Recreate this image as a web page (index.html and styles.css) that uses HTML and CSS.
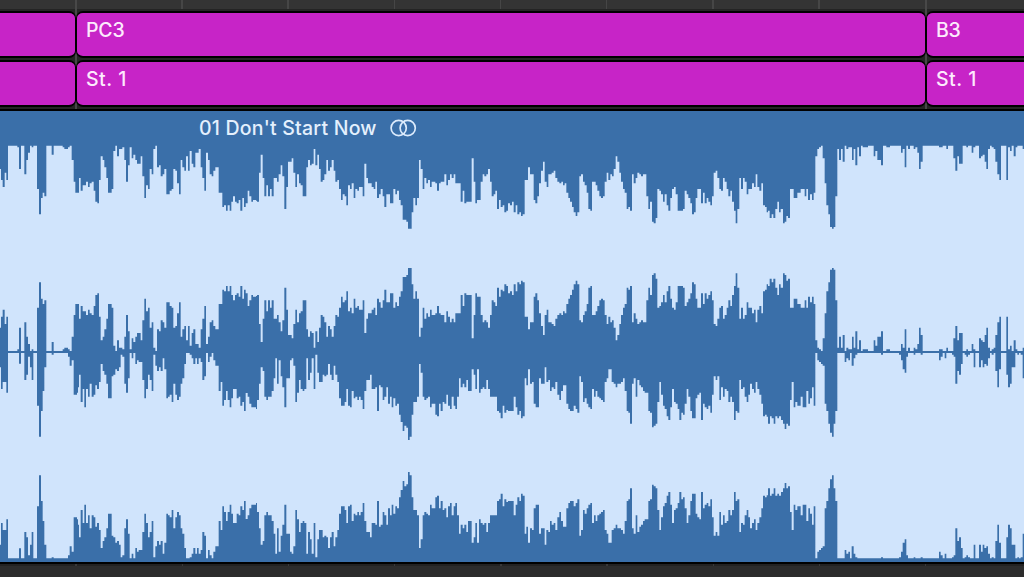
FILE: index.html
```html
<!DOCTYPE html>
<html lang="en">
<head>
<meta charset="utf-8">
<title>Arrangement</title>
<link rel="stylesheet" href="styles.css">
</head>
<body>
<main class="arrange">
  <div class="ruler-gap"></div>
  <div class="lane">
    <div class="region region-start"></div>
    <div class="region region-mid">PC3</div>
    <div class="region region-end">B3</div>
  </div>
  <div class="lane">
    <div class="region region-start"></div>
    <div class="region region-mid section">St. 1</div>
    <div class="region region-end section">St. 1</div>
  </div>
  <section class="audio">
    <header class="audio-head">
      <span class="audio-name">01 Don't Start Now</span>
      <svg class="stereo" viewBox="0 0 28 20"><circle cx="9.7" cy="10" r="7.6"/><circle cx="18.7" cy="10" r="7.6"/></svg>
    </header>
    <svg class="wave" viewBox="0 435 3072 1251" preserveAspectRatio="none"><path id="left"/><path id="right"/></svg>
  </section>
  <div class="lane-gap"></div>
</main>
<script src="wave.js"></script>
</body>
</html>
```
FILE: styles.css
```css
* { box-sizing: border-box; }
body {
  margin: 0;
  width: 1024px;
  height: 577px;
  overflow: hidden;
  background: #2c2c2c;
  font-family: Inter, "Liberation Sans", sans-serif;
}
.arrange {
  height: 577px;
  display: flex;
  flex-direction: column;
  background:
    linear-gradient(#484848, #484848) 75px 0 / 2px 109px no-repeat,
    linear-gradient(#484848, #484848) 925px 0 / 2px 109px no-repeat,
    repeating-linear-gradient(90deg, #464646 0 1.5px, transparent 1.5px 106.2px) 75.3px 0 / 1100px 9px no-repeat,
    linear-gradient(#343434 0 9px, #242424 9px 111px, #2c2c2c 111px);
}
.ruler-gap { height: 11px; flex: none; }
.lane {
  height: 47px;
  margin-bottom: 2px;
  flex: none;
  display: grid;
  grid-template-columns: 76px 850px 1fr;
}
.region {
  background: #c724c7;
  border: solid #000;
  border-width: 2px 1px;
  border-radius: 7px;
  padding: 4.5px 0 0 9px;
  color: #fdeafd;
  font-size: 19.5px;
  font-weight: 500;
  letter-spacing: -0.2px;
  line-height: 24px;
}
.section { letter-spacing: 0.5px; }
.region-start { border-left: 0; border-top-left-radius: 0; border-bottom-left-radius: 0; }
.region-end { border-right: 0; border-top-right-radius: 0; border-bottom-right-radius: 0; }
.audio {
  flex: none;
  height: 455px;
  border-top: 2px solid #000;
  border-bottom: 2px solid #000;
  background: #3a6fa9;
}
.audio-head {
  height: 34px;
  padding-left: 199px;
  display: flex;
  align-items: center;
  color: #e4f0fd;
}
.audio-name { width: 180px; white-space: nowrap; font-size: 19.5px; font-weight: 500; line-height: 24px; letter-spacing: 0.22px; }
.stereo { width: 28px; height: 20px; margin-left: 10px; fill: none; stroke: #dcebfc; stroke-width: 1.7; }
.wave { display: block; width: 1024px; height: 417px; fill: #d0e4fc; }
.lane-gap {
  height: 2px;
  background: repeating-linear-gradient(90deg, #383838 0 1.5px, #222 1.5px 106.2px) -30.9px 0 / 1100px 2px no-repeat;
}
```
FILE: wave.js
```js
// Envelope runs per quarter of the clip: "start:edge"; each run holds until the next start.
const left = [
  "0:203 3:170 8:149 14:192 19:170 24:273 52:268 57:203 63:273 73:187 79:230 84:252 90:273 95:268 100:273 111:143 117:67 123:116 128:132 133:121 139:273 155:246 161:273 188:268 193:263 204:268 209:273 215:230 221:165 226:132 237:176 242:138 248:154 258:165 264:149 269:160 275:165 281:138 286:105 292:100 297:170 302:241 308:230 313:208 319:176 324:132 335:143 340:257 346:273 351:241 357:263 367:268 373:230 378:165 384:214 389:268 395:235 400:246 406:230 411:219 422:241 427:181 433:116 438:154 444:143 449:203 455:187 460:263 466:273 471:208 477:214 482:181 488:187 493:203 499:127 509:138 515:143 520:203 526:198 531:160 537:127 542:230 547:208 553:198 558:241 564:198 569:257 575:219 580:208 586:252 596:263 602:208 607:176 613:138 618:252 624:230 629:187 635:181 640:198 646:208 656:132 667:89 672:94 678:78 683:94 689:78 694:105 699:121 705:105 710:100 716:110 721:78 727:116 732:89 737:100 743:138 748:121 754:105 759:110",
  "0:108 3:105 9:192 14:246 20:176 25:121 31:154 36:121 42:143 47:121 53:176 63:165 68:187 74:214 79:181 85:83 91:149 96:225 107:235 112:192 118:149 123:187 129:160 134:154 140:121 151:208 156:230 162:214 167:219 173:263 178:214 184:246 189:203 194:165 200:170 205:187 211:230 216:198 222:208 227:230 233:198 238:165 244:170 249:143 255:110 260:127 266:121 271:94 276:154 282:143 287:160 293:116 298:143 304:138 309:149 320:121 325:219 331:176 336:160 347:149 353:143 358:165 363:116 369:127 374:143 380:121 385:89 391:127 402:100 412:143 418:127 423:138 429:110 434:94 440:51 451:45 456:24 467:73 472:116 478:94 483:116 489:230 494:203 500:143 505:176 511:160 516:170 522:149 527:165 538:160 543:138 549:160 554:165 565:187 571:154 576:170 582:187 587:176 593:187 598:160 614:105 620:138 625:100 631:105 647:235 653:165 658:100 663:110 674:165 680:187 685:181 691:187 696:203 702:165 707:121 713:127 718:138 723:83 729:110 734:89 740:94 745:73 751:78 756:100 762:94",
  "0:105 5:73 11:94 16:67 22:73 27:62 32:67 38:170 48:208 54:187 65:110 70:100 76:121 81:160 87:198 93:225 98:165 104:149 109:187 119:192 125:198 130:176 136:165 142:160 148:165 153:154 158:160 163:132 169:116 174:105 180:89 185:73 191:62 196:73 202:181 207:187 213:165 218:154 224:132 229:83 235:78 240:165 251:154 256:138 262:121 267:116 273:121 278:165 284:192 289:170 295:187 300:181 305:203 311:241 316:225 322:192 327:165 333:143 338:132 344:83 349:89 354:78 360:187 365:160 371:176 376:192 382:187 387:181 393:187 403:121 409:83 414:105 420:45 425:40 431:56 436:143 442:138 447:127 453:105 458:127 464:94 469:78 475:116 480:143 486:149 491:127 497:78 513:83 518:138 524:127 529:116 535:100 540:67 546:73 551:116 556:143 567:100 573:132 578:100 584:116 589:105 595:94 600:121 605:192 611:198 616:176 622:143 627:138 633:176 638:165 644:143 649:121 655:138 660:105 666:78 671:40 676:83 682:176 687:143 693:176 698:165 704:127 709:143 720:160 726:149 731:187 736:149 742:138 748:160 753:94 759:89 764:73",
  "0:78 5:56 11:67 16:56 22:83 28:105 33:73 38:83 45:40 50:45 55:62 60:56 66:143 77:116 88:132 98:143 110:121 115:143 120:110 126:127 132:110 137:132 142:241 148:263 153:268 159:273 164:235 170:160 175:94 181:67 186:29 192:24 197:29 202:121 208:263 213:230 219:263 224:225 230:273 235:263 241:268 252:230 257:263 262:214 268:268 273:241 279:273 284:268 300:273 317:241 322:257 328:230 339:214 345:273 355:268 366:273 399:252 404:263 410:208 415:273 420:263 426:273 437:263 442:268 448:252 453:203 458:225 464:273 513:268 524:273 535:263 540:273 556:235 562:198 568:241 573:219 584:273 595:268 600:273 611:252 616:268 622:273 633:235 639:241 644:246 650:225 655:203 660:263 666:273 671:268 677:263 682:225 688:187 694:170 699:273 715:170 720:268 726:257 731:273 737:241 743:268 748:273 764:263"
];
const right = [
  "0:322 3:387 8:366 19:398 24:279 57:311 63:279 73:360 79:344 84:290 90:322 95:360 100:279 111:437 117:530 123:453 128:393 133:322 139:279 155:284 161:279 204:290 209:317 215:301 221:404 231:398 234:382 237:344 242:426 248:387 253:442 258:387 264:410 269:371 275:410 281:404 286:376 291:387 297:366 302:312 308:333 313:344 319:371 324:415 335:349 340:344 346:328 351:333 357:322 362:284 367:290 373:371 378:398 384:355 389:279 395:295 400:279 406:312 411:301 416:306 427:360 433:415 438:387 444:344 449:360 455:393 460:284 466:317 471:333 477:322 482:333 488:295 493:328 499:415 504:410 509:404 515:426 520:371 526:404 531:420 537:410 542:371 547:355 553:312 558:279 569:284 575:295 580:312 586:295 591:312 596:295 602:306 607:360 613:349 618:279 624:306 629:290 635:279 640:301 646:317 656:393 662:366 667:437 672:420 678:393 683:420 689:442 694:415 699:387 710:415 716:410 721:437 727:426 732:453 737:399 743:410 748:431 754:442",
  "0:447 3:420 9:371 14:322 20:333 25:410 31:420 36:410 47:393 53:355 58:295 63:371 68:301 74:349 79:382 85:442 91:355 102:301 107:295 112:317 118:426 123:398 129:360 134:387 140:393 145:387 151:295 156:360 162:338 167:295 173:387 178:284 184:338 189:366 200:344 205:349 211:344 216:312 222:344 227:360 233:317 238:344 244:366 249:415 255:437 266:426 271:387 276:437 282:442 287:393 293:415 298:410 304:420 309:410 314:420 320:447 325:393 331:360 342:344 347:387 358:382 363:453 369:376 374:382 380:420 385:410 391:382 396:431 402:410 407:442 412:415 418:437 423:431 429:464 434:486 440:513 445:497 451:503 456:540 461:530 467:464 472:426 483:410 489:312 494:338 500:410 505:420 511:415 516:410 522:442 527:431 538:464 543:469 549:431 554:453 560:426 565:431 571:404 576:437 582:447 587:410 593:437 598:447 603:410 609:355 614:382 620:371 625:382 631:360 636:393 647:328 653:344 658:387 663:328 669:398 674:387 680:382 685:387 691:360 696:387 702:410 723:453 729:458 734:475 740:437 745:458 751:450 756:453",
  "0:453 5:410 11:442 16:464 22:453 27:475 32:469 38:355 43:376 48:328 54:371 60:366 65:431 71:442 81:355 87:371 98:322 103:366 109:360 114:393 119:382 125:387 130:366 136:404 142:420 147:393 153:376 163:431 169:447 174:453 185:437 191:447 196:458 202:349 207:366 213:426 218:415 224:431 229:442 235:447 240:387 246:410 251:393 256:410 262:415 267:420 273:426 278:366 284:355 289:328 299:366 305:371 311:382 316:371 327:366 333:355 338:393 344:453 349:458 354:491 360:371 365:355 371:410 376:360 382:376 387:382 393:393 398:398 409:453 414:458 420:502 425:497 431:491 436:426 442:366 447:404 453:437 458:447 464:469 469:480 475:442 480:387 486:426 491:431 497:447 502:480 508:458 513:464 518:431 524:387 529:410 535:453 540:475 551:415 556:404 562:398 567:480 573:431 578:442 584:447 589:437 595:458 600:404 605:349 611:360 616:349 622:420 627:382 633:410 638:387 644:393 649:426 655:410 660:426 666:480 671:453 676:458 682:360 687:387 693:382 698:410 704:426 709:404 714:371 720:387 726:398 731:366 736:387 742:404 748:431 753:469 759:464 764:470",
  "0:491 6:469 11:475 17:491 22:469 28:475 33:469 39:480 45:491 50:507 55:491 60:497 66:420 71:366 77:442 82:426 88:437 98:410 104:442 115:393 121:431 126:415 132:382 137:437 142:279 148:301 153:306 159:312 164:317 170:431 175:453 181:491 186:518 192:530 197:491 202:453 208:279 230:306 235:295 241:301 246:279 251:317 257:295 262:284 268:279 339:284 345:279 393:284 399:301 404:328 410:338 415:290 420:279 437:284 442:279 458:284 464:279 513:301 518:290 524:279 530:295 535:279 552:284 557:290 562:371 568:333 573:344 579:312 584:279 590:284 595:290 600:284 606:279 617:322 622:279 633:322 639:301 644:322 649:312 655:317 660:295 666:279 671:284 677:279 682:333 688:382 693:328 699:279 715:344 720:382 726:371 731:322 742:279 748:284 753:279 758:284 764:355"
];

const QUARTER = 768;
const INNER = 780;

function draw(id, quarters, mirror) {
  const runs = quarters.flatMap((text, q) =>
    text.split(" ").map(pair => {
      const [x, v] = pair.split(":").map(Number);
      return { x: q * QUARTER + x, v };
    }));
  let d = "";
  runs.forEach((run, i) => {
    const end = i + 1 < runs.length ? runs[i + 1].x : QUARTER * 4;
    d += (i ? "L" : "M") + run.x + " " + (INNER + run.v) + "H" + end;
  });
  for (let i = runs.length - 1; i >= 0; i--) {
    const end = i + 1 < runs.length ? runs[i + 1].x : QUARTER * 4;
    d += "L" + end + " " + mirror(runs[i].v) + "H" + runs[i].x;
  }
  document.getElementById(id).setAttribute("d", d + "Z");
}

draw("left", left, v => (v >= 271 ? 437 : Math.max(437, 710 - v)));
draw("right", right, v => Math.min(1675, 1956 - v));
```
